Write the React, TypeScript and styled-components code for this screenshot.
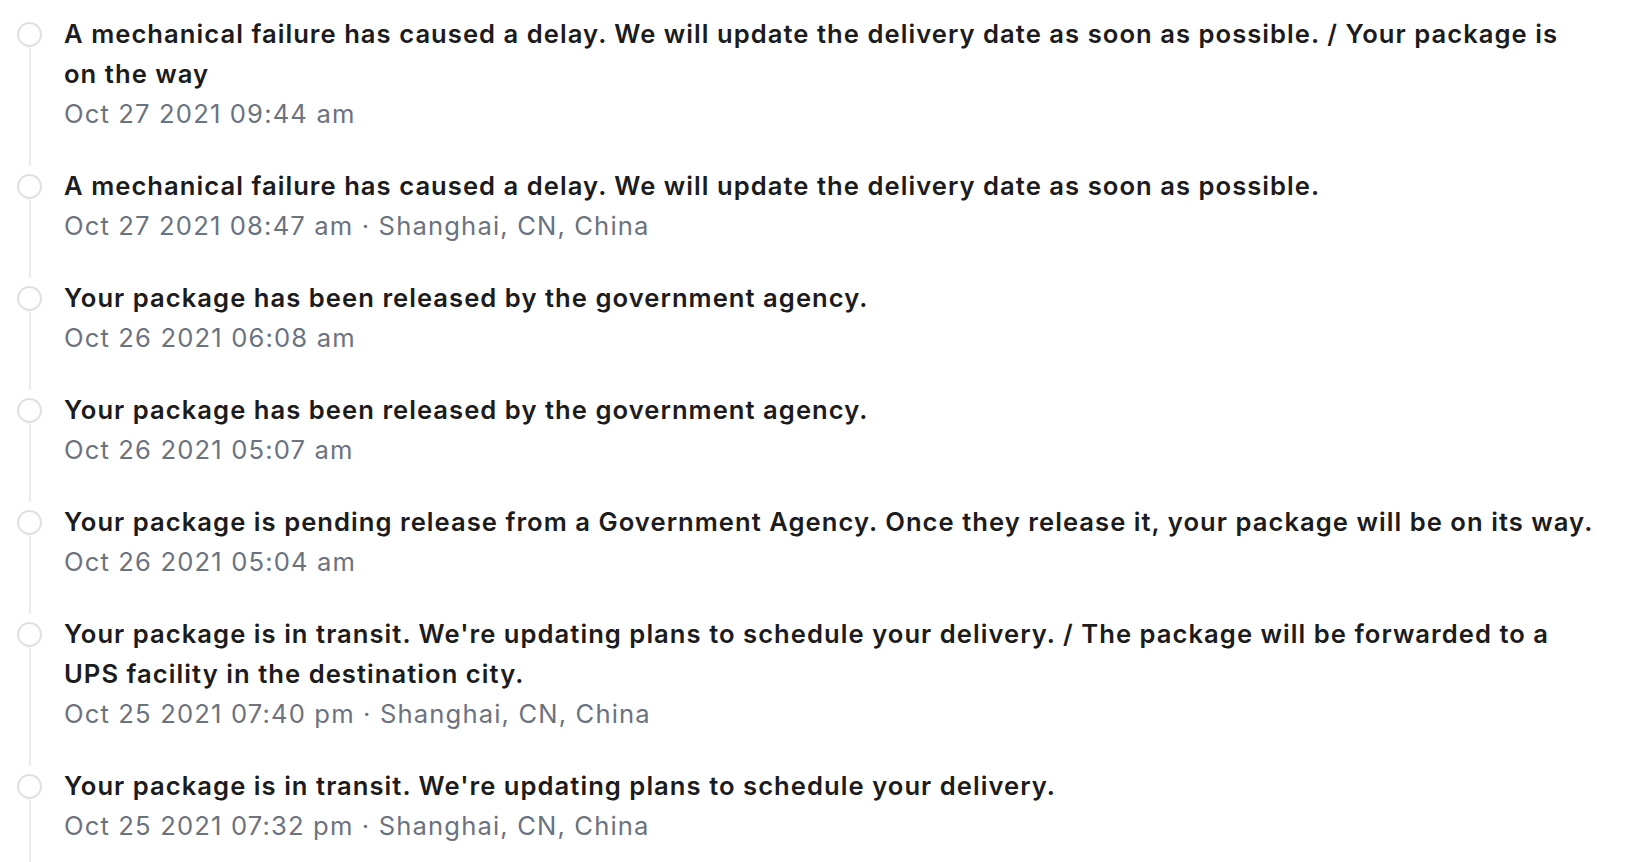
import React from 'react';
import styled, { createGlobalStyle } from 'styled-components';

const GlobalStyle = createGlobalStyle`
  html, body {
    margin: 0;
    padding: 0;
    background: #ffffff;
  }
  body {
    font-family: Inter, "Noto Sans", "Liberation Sans", sans-serif;
    -webkit-font-smoothing: antialiased;
  }
`;

const Timeline = styled.ul`
  list-style: none;
  margin: 0;
  padding: 14px 0 0 17px;
  width: 1594px;
  box-sizing: border-box;
  overflow: hidden;
  height: 862px;
`;

const Event = styled.li`
  display: flex;
  gap: 22px;
`;

const Marker = styled.div`
  display: flex;
  flex-direction: column;
  align-items: center;
  flex: 0 0 25px;
  padding-top: 8px;
`;

const Dot = styled.span`
  width: 25px;
  height: 25px;
  box-sizing: border-box;
  border: 2px solid #e0e0e0;
  border-radius: 50%;
  background: #fff;
`;

const Rail = styled.span`
  flex: 1;
  width: 2px;
  background: #ececec;
`;

const Body = styled.div`
  flex: 1;
  min-width: 0;
  padding-bottom: 32px;
  font-size: 25.6px;
  line-height: 40px;
`;

const Message = styled.div`
  font-weight: 600;
  letter-spacing: 1.04px;
  color: #1c1c1e;
`;

const Meta = styled.div`
  font-weight: 400;
  letter-spacing: 1.15px;
  color: #6b7280;
`;

type TrackingEvent = {
  message: string;
  time: string;
  location?: string;
};

const events: TrackingEvent[] = [
  {
    message:
      'A mechanical failure has caused a delay. We will update the delivery date as soon as possible. / Your package is on the way',
    time: 'Oct 27 2021 09:44 am',
  },
  {
    message: 'A mechanical failure has caused a delay. We will update the delivery date as soon as possible.',
    time: 'Oct 27 2021 08:47 am',
    location: 'Shanghai, CN, China',
  },
  {
    message: 'Your package has been released by the government agency.',
    time: 'Oct 26 2021 06:08 am',
  },
  {
    message: 'Your package has been released by the government agency.',
    time: 'Oct 26 2021 05:07 am',
  },
  {
    message:
      'Your package is pending release from a Government Agency. Once they release it, your package will be on its way.',
    time: 'Oct 26 2021 05:04 am',
  },
  {
    message:
      "Your package is in transit. We're updating plans to schedule your delivery. / The package will be forwarded to a UPS facility in the destination city.",
    time: 'Oct 25 2021 07:40 pm',
    location: 'Shanghai, CN, China',
  },
  {
    message: "Your package is in transit. We're updating plans to schedule your delivery.",
    time: 'Oct 25 2021 07:32 pm',
    location: 'Shanghai, CN, China',
  },
];

const App = () => {
  return (
    <>
      <GlobalStyle />
      <Timeline>
        {events.map((ev, i) => (
          <Event key={i}>
            <Marker>
              <Dot />
              <Rail />
            </Marker>
            <Body>
              <Message>{ev.message}</Message>
              <Meta>
                {ev.time}
                {ev.location ? ` · ${ev.location}` : ''}
              </Meta>
            </Body>
          </Event>
        ))}
      </Timeline>
    </>
  );
};

export default App;
